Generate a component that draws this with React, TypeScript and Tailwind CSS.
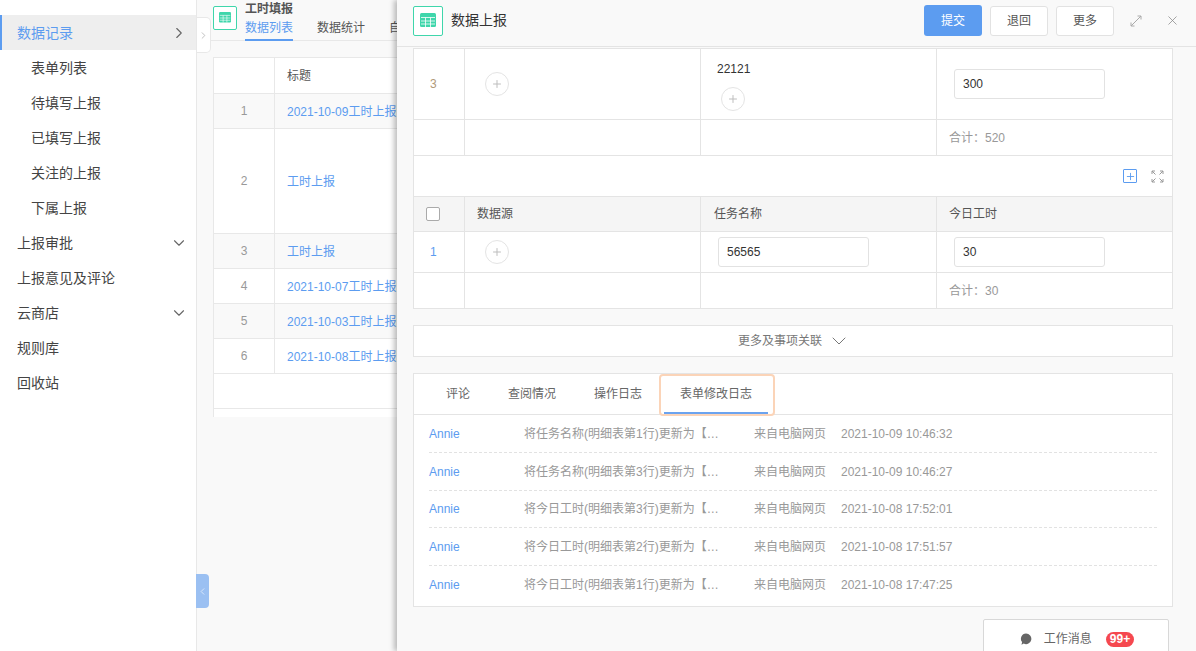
import React from 'react';
import { ChevronDown, ChevronLeft, ChevronRight, Plus, X } from 'lucide-react';

const font = { fontFamily: '"Liberation Sans", "Noto Sans CJK SC", sans-serif' };

const TableIcon = ({ size = 16 }: { size?: number }) => (
  <svg width={size} height={size} viewBox="0 0 16 16">
    <rect x="0" y="0" width="16" height="14" rx="1.5" fill="#3fd6ab" />
    <path d="M1 4.500h14M1 8h14M1 11h14M5.500 4.500V14M10.500 4.500V14" stroke="#fff" strokeWidth="0.8" />
  </svg>
);

const AddCircle = () => (
  <div className="w-6 h-6 rounded-full border border-[#e4e4e4] bg-white flex items-center justify-center">
    <Plus size={12} className="text-[#bdbdbd]" />
  </div>
);

const Input = ({ value }: { value: string }) => (
  <div className="w-[151px] h-[30px] border border-[#e2e2e2] rounded-[3px] bg-white flex items-center px-2 text-xs text-[#333]">{value}</div>
);

const Button = ({ children, primary }: { children: string, primary?: boolean }) => (
  <button className={`w-[58px] rounded-[3px] text-xs ${primary ? 'bg-[#5c9cf0] text-white h-[31px]' : 'h-[30px] bg-white border border-[#e2e2e2] text-[#555]'}`}>
    {children}
  </button>
);

const Row = ({ className = '', children }: { className?: string, children: React.ReactNode }) => (
  <div className={`grid grid-cols-[51px_236px_236px_1fr] border-b border-[#e4e4e4] ${className}`}>{children}</div>
);

const Cell = ({ className = '', children }: { className?: string, children?: React.ReactNode }) => (
  <div className={`border-r border-[#e4e4e4] last:border-r-0 ${className}`}>{children}</div>
);

const menu = [
  { label: '数据记录', active: true },
  { label: '表单列表', sub: true },
  { label: '待填写上报', sub: true },
  { label: '已填写上报', sub: true },
  { label: '关注的上报', sub: true },
  { label: '下属上报', sub: true },
  { label: '上报审批', arrow: true },
  { label: '上报意见及评论' },
  { label: '云商店', arrow: true },
  { label: '规则库' },
  { label: '回收站' },
];

const listRows = [
  { no: '1', title: '2021-10-09工时上报', h: 'h-[35px]', bg: 'bg-[#f9f9f9]' },
  { no: '2', title: '工时上报', h: 'h-[105px]', bg: 'bg-white' },
  { no: '3', title: '工时上报', h: 'h-[35px]', bg: 'bg-[#f9f9f9]' },
  { no: '4', title: '2021-10-07工时上报', h: 'h-[35px]', bg: 'bg-white' },
  { no: '5', title: '2021-10-03工时上报', h: 'h-[35px]', bg: 'bg-[#f9f9f9]' },
  { no: '6', title: '2021-10-08工时上报', h: 'h-[35px]', bg: 'bg-white' },
];

const logs = [
  { text: '将任务名称(明细表第1行)更新为【…', time: '2021-10-09 10:46:32' },
  { text: '将任务名称(明细表第3行)更新为【…', time: '2021-10-09 10:46:27' },
  { text: '将今日工时(明细表第3行)更新为【…', time: '2021-10-08 17:52:01' },
  { text: '将今日工时(明细表第2行)更新为【…', time: '2021-10-08 17:51:57' },
  { text: '将今日工时(明细表第1行)更新为【…', time: '2021-10-08 17:47:25' },
];

export default function App() {
  return (
    <div style={font} className="relative flex w-[1196px] h-[651px] overflow-hidden bg-white">
      {/* left menu */}
      <div className="w-[197px] shrink-0 border-r border-[#e8e8e8] pt-[15px] text-[14px] text-[#444]">
        {menu.map((m) => (
          <div
            key={m.label}
            className={`h-[35px] flex items-center justify-between pr-[8px] ${m.sub ? 'pl-[31px]' : 'pl-[17px]'} ${m.active ? 'bg-[#eeeeee] border-l-2 border-[#5c9cf0] !pl-[15px] text-[#5c9cf0]' : ''}`}
          >
            <span className="pt-[2px]">{m.label}</span>
            {m.active && <ChevronRight size={18} strokeWidth={1.5} className="text-[#666]" />}
            {m.arrow && <ChevronDown size={18} strokeWidth={1.5} className="text-[#666]" />}
          </div>
        ))}
      </div>

      {/* list page behind the drawer */}
      <div className="relative flex-1 bg-[#f9f9f9] min-w-0">
        <div className="h-[41px] border-b border-[#e8e8e8] flex pl-4 pt-[6px]">
          <div className="w-6 h-6 border border-[#3fd6ab] rounded-[2px] flex items-center justify-center bg-white">
            <TableIcon size={12} />
          </div>
          <div className="ml-2 -mt-[6px]">
            <div className="text-xs font-bold text-[#555] leading-[17px] pt-[1px]">工时填报</div>
            <div className="flex gap-6 text-xs text-[#555] mt-[1px]">
              <span className="text-[#5c9cf0] border-b-2 border-[#5c9cf0] h-[22px] leading-[18px]">数据列表</span>
              <span className="leading-[18px]">数据统计</span>
              <span className="leading-[18px]">自定义</span>
            </div>
          </div>
        </div>
        <div className="ml-4 mt-4 w-[600px] h-[360px] bg-white border-l border-t border-[#e8e8e8] text-xs">
          <div className="flex h-[36px] border-b border-[#e8e8e8]">
            <div className="w-[61px] border-r border-[#e8e8e8]" />
            <div className="pl-3 flex items-center text-[#555]">标题</div>
          </div>
          {listRows.map((r) => (
            <div key={r.no} className={`flex ${r.h} ${r.bg} border-b border-[#e8e8e8]`}>
              <div className="w-[61px] shrink-0 border-r border-[#e8e8e8] flex items-center justify-center text-[#999]">{r.no}</div>
              <div className="pl-3 flex items-center text-[#5c9cf0] pt-[1px]">{r.title}</div>
            </div>
          ))}
          <div className="h-[35px] border-b border-[#e8e8e8]" />
        </div>
      </div>

      {/* sidebar collapse handles */}
      <div className="absolute left-[197px] top-[17px] w-[14px] h-[36px] bg-white border border-l-0 border-[#e8e8e8] rounded-r-[5px] flex items-center justify-center">
        <ChevronRight size={11} className="text-[#bbb]" />
      </div>
      <div className="absolute left-[196px] top-[574px] w-[13px] h-[34px] bg-[#9bc0f2] rounded-r-[4px] flex items-center justify-center">
        <ChevronLeft size={11} className="text-[#dbe8fb]" />
      </div>

      {/* drawer */}
      <div className="absolute left-[397px] top-0 w-[799px] h-[651px] bg-[#f9f9f9] shadow-[-3px_0_5px_rgba(0,0,0,0.25)] flex flex-col">
        <div className="h-[47px] shrink-0 border-b border-[#e4e4e4] flex items-center pl-4 pr-4 pb-[5px]">
          <div className="w-[30px] h-[30px] border border-[#3fd6ab] rounded-[2px] bg-white flex items-center justify-center">
            <TableIcon />
          </div>
          <span className="ml-2 text-[14px] text-[#333]">数据上报</span>
          <div className="ml-auto flex gap-2 items-center">
            <Button primary>提交</Button>
            <Button>退回</Button>
            <Button>更多</Button>
          </div>
          <svg className="ml-4 mr-[23px]" width="12" height="12" viewBox="0 0 12 12" fill="none" stroke="#aaa" strokeWidth="1">
            <path d="M1 11L11 1M7.500 1H11V4.500M1 7.500V11H4.500" />
          </svg>
          <X size={15} strokeWidth={1.2} className="text-[#888]" />
        </div>

        <div className="ml-4 w-[760px] mt-px bg-white border-l border-r border-t border-[#e4e4e4] text-xs">
          <Row className="h-[71px]">
            <Cell className="flex items-center pl-4 text-[#b09a7a]">3</Cell>
            <Cell className="flex items-center pl-5"><AddCircle /></Cell>
            <Cell className="pl-4 pt-[12px] text-[#333]">
              <div>22121</div>
              <div className="mt-[10px] ml-1"><AddCircle /></div>
            </Cell>
            <Cell className="flex items-center pl-[17px]"><Input value="300" /></Cell>
          </Row>
          <Row className="h-[36px]">
            <Cell /><Cell /><Cell />
            <Cell className="flex items-center pl-3 text-[#999]">合计：520</Cell>
          </Row>
          <div className="h-[41px] border-b border-[#e4e4e4] flex items-center justify-end gap-[14px] pr-[8px]">
            <div className="w-[14px] h-[14px] border border-[#5c9cf0] rounded-[1px] flex items-center justify-center">
              <Plus size={11} className="text-[#5c9cf0]" />
            </div>
            <svg width="13" height="13" viewBox="0 0 13 13" fill="none" stroke="#999" strokeWidth="1">
              <path d="M1 1l3.500 3.500M1 4V1h3M12 1L8.500 4.500M9 1h3v3M1 12l3.500-3.500M1 9v3h3M12 12L8.500 8.500M9 12h3V9" />
            </svg>
          </div>
          <Row className="h-[35px] bg-[#f5f5f5] text-[#555]">
            <Cell className="flex items-center pl-3">
              <div className="w-[14px] h-[14px] border border-[#aaa] rounded-[2px] bg-white" />
            </Cell>
            <Cell className="flex items-center pl-3">数据源</Cell>
            <Cell className="flex items-center pl-[13px]">任务名称</Cell>
            <Cell className="flex items-center pl-3">今日工时</Cell>
          </Row>
          <Row className="h-[41px]">
            <Cell className="flex items-center pl-4 text-[#5c9cf0]">1</Cell>
            <Cell className="flex items-center pl-5"><AddCircle /></Cell>
            <Cell className="flex items-center pl-[17px]"><Input value="56565" /></Cell>
            <Cell className="flex items-center pl-[17px]"><Input value="30" /></Cell>
          </Row>
          <Row className="h-[36px]">
            <Cell /><Cell /><Cell />
            <Cell className="flex items-center pl-3 text-[#999]">合计：30</Cell>
          </Row>
        </div>

        <div className="ml-4 w-[760px] h-[32px] mt-4 bg-white border border-[#e4e4e4] flex items-center justify-center gap-[5px] pl-[3px] text-xs text-[#777]">
          <span>更多及事项关联</span>
          <ChevronDown size={24} strokeWidth={1} />
        </div>

        <div className="ml-4 w-[760px] h-[234px] mt-4 bg-white border border-[#e4e4e4] text-xs">
          <div className="h-[41px] border-b border-[#e4e4e4] flex pl-[13px] text-[#666]">
            <div className="px-[19px] flex items-center">评论</div>
            <div className="px-[19px] flex items-center">查阅情况</div>
            <div className="px-[19px] flex items-center">操作日志</div>
            <div className="relative px-[19px] flex items-center">
              表单修改日志
              <div className="absolute left-[3px] right-[3px] bottom-0 h-[2px] bg-[#6ba3ef]" />
              <div className="absolute -left-[2px] -right-[4px] top-0 -bottom-[2px] border-2 border-[#fbd4b8] rounded-[4px]" />
            </div>
          </div>
          <div className="px-[15px]">
            {logs.map((l, i) => (
              <div key={l.time} className={`h-[37.75px] flex items-center text-[#999] pt-[1px] ${i < 4 ? 'border-b border-dashed border-[#e2e2e2]' : ''}`}>
                <span className="w-[95px] text-[#5c9cf0]">Annie</span>
                <span className="w-[195px] whitespace-nowrap">{l.text}</span>
                <span className="ml-[35px] w-[87px]">来自电脑网页</span>
                <span>{l.time}</span>
              </div>
            ))}
          </div>
        </div>

        {/* floating message button */}
        <div className="absolute left-[586px] top-[619px] w-[186px] h-[40px] bg-white border border-[#d8d8d8] rounded-[2px] flex items-center justify-center pl-[2px] text-xs text-[#666]">
          <svg width="12" height="12" viewBox="0 0 12 12"><path d="M6 0.500a5.300 5.300 0 1 1-2.200 10.100L1.500 11.700l.6-2.600A5.300 5.300 0 0 1 6 0.500z" fill="#666" /></svg>
          <span className="ml-3">工作消息</span>
          <span className="ml-[14px] px-[4px] h-[15px] leading-[15px] rounded-full bg-[#f5484f] text-white font-bold">99+</span>
        </div>
      </div>
    </div>
  );
}
